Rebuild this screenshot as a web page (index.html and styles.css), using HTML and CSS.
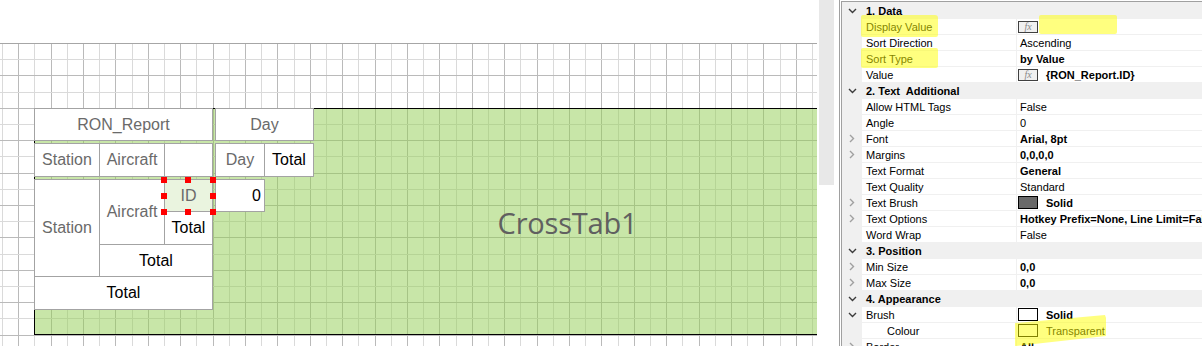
FILE: index.html
```html
<!DOCTYPE html>
<html>
<head>
<meta charset="utf-8">
<link rel="stylesheet" href="styles.css">
</head>
<body>
<div class="app">
  <div class="designer">
    <div class="page">
      <div class="crosstab">
        <div class="ct-cells">
          <div class="cell hdr g-ron">RON_Report</div>
          <div class="cell hdr g-dayh">Day</div>
          <div class="cell hdr g-st1">Station</div>
          <div class="cell hdr g-ac1">Aircraft</div>
          <div class="cell g-emp"></div>
          <div class="cell hdr g-day2">Day</div>
          <div class="cell g-tot1">Total</div>
          <div class="cell hdr g-st2">Station</div>
          <div class="cell hdr g-ac2">Aircraft</div>
          <div class="cell hdr sel g-id">ID
            <span class="hd h1"></span><span class="hd h2"></span><span class="hd h3"></span>
            <span class="hd h4"></span><span class="hd h5"></span>
            <span class="hd h6"></span><span class="hd h7"></span><span class="hd h8"></span>
          </div>
          <div class="cell num g-zero">0</div>
          <div class="cell g-tot2">Total</div>
          <div class="cell g-tot3">Total</div>
          <div class="cell g-tot4">Total</div>
        </div>
        <div class="ct-title">CrossTab1</div>
      </div>
    </div>
  </div>
  <div class="vscroll"><div class="thumb"></div></div>
  <div class="props">
    <div class="pg">
      <div class="row cat"><span class="gut"><svg class="chev-d" width="9" height="6" viewBox="0 0 9 6"><path d="M1 1 L4.5 4.5 L8 1" /></svg></span><span class="name">1. Data</span></div>
      <div class="row"><span class="gut"></span><span class="name">Display Value</span><span class="val"><span class="fx">fx</span></span></div>
      <div class="row"><span class="gut"></span><span class="name">Sort Direction</span><span class="val"><span class="txt">Ascending</span></span></div>
      <div class="row"><span class="gut"></span><span class="name">Sort Type</span><span class="val"><span class="txt b">by Value</span></span></div>
      <div class="row"><span class="gut"></span><span class="name">Value</span><span class="val"><span class="fx">fx</span><span class="txt b gap">{RON_Report.ID}</span></span></div>
      <div class="row cat"><span class="gut"><svg class="chev-d" width="9" height="6" viewBox="0 0 9 6"><path d="M1 1 L4.5 4.5 L8 1" /></svg></span><span class="name">2. Text  Additional</span></div>
      <div class="row"><span class="gut"></span><span class="name">Allow HTML Tags</span><span class="val"><span class="txt">False</span></span></div>
      <div class="row"><span class="gut"></span><span class="name">Angle</span><span class="val"><span class="txt">0</span></span></div>
      <div class="row"><span class="gut"><svg class="chev-r" width="6" height="9" viewBox="0 0 6 9"><path d="M1 1 L4.5 4.5 L1 8" /></svg></span><span class="name">Font</span><span class="val"><span class="txt b">Arial, 8pt</span></span></div>
      <div class="row"><span class="gut"><svg class="chev-r" width="6" height="9" viewBox="0 0 6 9"><path d="M1 1 L4.5 4.5 L1 8" /></svg></span><span class="name">Margins</span><span class="val"><span class="txt b">0,0,0,0</span></span></div>
      <div class="row"><span class="gut"></span><span class="name">Text Format</span><span class="val"><span class="txt b">General</span></span></div>
      <div class="row"><span class="gut"></span><span class="name">Text Quality</span><span class="val"><span class="txt">Standard</span></span></div>
      <div class="row"><span class="gut"><svg class="chev-r" width="6" height="9" viewBox="0 0 6 9"><path d="M1 1 L4.5 4.5 L1 8" /></svg></span><span class="name">Text Brush</span><span class="val"><span class="sw sw-gray"></span><span class="txt b gap">Solid</span></span></div>
      <div class="row"><span class="gut"><svg class="chev-r" width="6" height="9" viewBox="0 0 6 9"><path d="M1 1 L4.5 4.5 L1 8" /></svg></span><span class="name">Text Options</span><span class="val"><span class="txt b">Hotkey Prefix=None, Line Limit=False, Word Wrap=False</span></span></div>
      <div class="row"><span class="gut"></span><span class="name">Word Wrap</span><span class="val"><span class="txt">False</span></span></div>
      <div class="row cat"><span class="gut"><svg class="chev-d" width="9" height="6" viewBox="0 0 9 6"><path d="M1 1 L4.5 4.5 L8 1" /></svg></span><span class="name">3. Position</span></div>
      <div class="row"><span class="gut"><svg class="chev-r" width="6" height="9" viewBox="0 0 6 9"><path d="M1 1 L4.5 4.5 L1 8" /></svg></span><span class="name">Min Size</span><span class="val"><span class="txt b">0,0</span></span></div>
      <div class="row"><span class="gut"><svg class="chev-r" width="6" height="9" viewBox="0 0 6 9"><path d="M1 1 L4.5 4.5 L1 8" /></svg></span><span class="name">Max Size</span><span class="val"><span class="txt b">0,0</span></span></div>
      <div class="row cat"><span class="gut"><svg class="chev-d" width="9" height="6" viewBox="0 0 9 6"><path d="M1 1 L4.5 4.5 L8 1" /></svg></span><span class="name">4. Appearance</span></div>
      <div class="row"><span class="gut"><svg class="chev-d" width="9" height="6" viewBox="0 0 9 6"><path d="M1 1 L4.5 4.5 L8 1" /></svg></span><span class="name">Brush</span><span class="val"><span class="sw sw-white"></span><span class="txt b gap">Solid</span></span></div>
      <div class="row"><span class="gut"></span><span class="name sub">Colour</span><span class="val"><span class="sw sw-white"></span><span class="txt gap">Transparent</span></span></div>
      <div class="row"><span class="gut"><svg class="chev-r" width="6" height="9" viewBox="0 0 6 9"><path d="M1 1 L4.5 4.5 L1 8" /></svg></span><span class="name">Border</span><span class="val"><span class="txt b">All</span></span></div>
    </div>
  </div>
  <div class="hl hl-dv"></div>
  <div class="hl hl-st"></div>
  <div class="hl hl-dvv"></div>
  <div class="hl hl-tr"></div>
</div>
</body>
</html>
```

FILE: styles.css
```css
* { box-sizing: border-box; }
html, body { margin: 0; padding: 0; }
body {
  width: 1202px;
  height: 346px;
  overflow: hidden;
  background: #fff;
  font-family: "Liberation Sans", Arial, sans-serif;
}
.app {
  position: relative;
  display: flex;
  height: 346px;
}

/* ---------- designer canvas ---------- */
.designer {
  flex: none;
  width: 817px;
  height: 346px;
  overflow: hidden;
  background: #fff;
}
.page {
  margin-top: 43px;
  height: 303px;
  border-top: 1px solid #a6a6a6;
  background-image:
    repeating-linear-gradient(180deg, transparent 0 15.2px, #dadada 15.2px 16.2px, transparent 16.2px 31.4px, #bababa 31.4px 32.4px),
    repeating-linear-gradient(90deg, transparent 0 2px, #dadada 2px 3px, transparent 3px 18.2px, #bababa 18.2px 19.2px, transparent 19.2px 32.4px);
}
.crosstab {
  margin: 64px 0 0 34px;
  width: 1066px;
  height: 227px;
  border: 1px solid #000;
  border-right: none;
  background: rgba(145, 205, 81, 0.5);
  display: grid;
}
.ct-cells {
  grid-area: 1 / 1;
  align-self: start;
  justify-self: start;
  margin: -1px 0 0 -1px;
  display: grid;
  grid-template-columns: 65px 65px 48px 3px 49px 49px;
  grid-template-rows: 32px 3px 33px 3px 32px 33px 32px 33px;
}
.cell {
  margin: 0 -1px -1px 0;
  border: 1px solid #a3a3a3;
  background: #fff;
  display: flex;
  align-items: center;
  justify-content: center;
  font-size: 16px;
  color: #000;
  white-space: nowrap;
}
.cell.hdr { color: #6a6a6a; }
.cell.num { justify-content: flex-end; padding-right: 3px; }
.cell.sel {
  position: relative;
  z-index: 1;
  background: #eaf4df;
}
.g-ron  { grid-column: 1 / 4; grid-row: 1 / 2; }
.g-dayh { grid-column: 5 / 7; grid-row: 1 / 2; }
.g-st1  { grid-column: 1 / 2; grid-row: 3 / 4; }
.g-ac1  { grid-column: 2 / 3; grid-row: 3 / 4; }
.g-emp  { grid-column: 3 / 4; grid-row: 3 / 4; }
.g-day2 { grid-column: 5 / 6; grid-row: 3 / 4; }
.g-tot1 { grid-column: 6 / 7; grid-row: 3 / 4; }
.g-st2  { grid-column: 1 / 2; grid-row: 5 / 8; }
.g-ac2  { grid-column: 2 / 3; grid-row: 5 / 7; }
.g-id   { grid-column: 3 / 4; grid-row: 5 / 6; }
.g-zero { grid-column: 5 / 6; grid-row: 5 / 6; }
.g-tot2 { grid-column: 3 / 4; grid-row: 6 / 7; }
.g-tot3 { grid-column: 2 / 4; grid-row: 7 / 8; }
.g-tot4 { grid-column: 1 / 4; grid-row: 8 / 9; }

.hd {
  position: absolute;
  width: 6px;
  height: 6px;
  background: #ff0000;
}
.h1 { left: -4px; top: -3px; }
.h2 { left: 20px; top: -3px; }
.h3 { left: 45px; top: -3px; }
.h4 { left: -4px; top: 13px; }
.h5 { left: 45px; top: 13px; }
.h6 { left: -4px; top: 29px; }
.h7 { left: 20px; top: 29px; }
.h8 { left: 45px; top: 29px; }

.ct-title {
  grid-area: 1 / 1;
  place-self: center;
  margin-top: 2px;
  font-family: "Open Sans", "Noto Sans", sans-serif;
  font-size: 29px;
  color: #606060;
  letter-spacing: -0.2px;
}

/* ---------- scrollbar ---------- */
.vscroll {
  flex: none;
  width: 22px;
  height: 346px;
  background: #fff;
}
.thumb {
  margin-left: 2px;
  width: 15px;
  height: 185px;
  background: #e8e8e8;
}

/* ---------- property grid ---------- */
.props {
  flex: 1;
  height: 346px;
  border-left: 1px solid #a0a0a0;
  padding: 1px 0 0 1px;
  overflow: hidden;
}
.pg {
  height: 100%;
  border-left: 1px solid #a0a0a0;
  border-top: 1px solid #a0a0a0;
  font-size: 11px;
  color: #000;
}
.row {
  display: grid;
  grid-template-columns: 20px 154px 1fr;
  height: 16px;
  border-top: 1px solid #f0f0f0;
  line-height: 15px;
}
.gut {
  background: #f0f0f0;
  display: flex;
  align-items: center;
  justify-content: center;
}
.name {
  padding-left: 4px;
  padding-top: 1px;
  white-space: pre;
  overflow: hidden;
}
.name.sub { padding-left: 25px; }
.val {
  border-left: 1px solid #f0f0f0;
  padding-left: 1px;
  display: flex;
  align-items: center;
  white-space: nowrap;
  overflow: hidden;
}
.row.cat { background: #f0f0f0; }
.row.cat .name { grid-column: 2 / 4; font-weight: bold; }
.txt { margin-left: 2px; padding-top: 2px; }
.txt.gap { margin-left: 8px; }
.b { font-weight: bold; }

.chev-d path { fill: none; stroke: #3c3c3c; stroke-width: 1.4; }
.chev-r path { fill: none; stroke: #a0a0a0; stroke-width: 1.4; }

.fx {
  flex: none;
  width: 20px;
  height: 12px;
  border: 1px solid #404040;
  background: #f0f0f0;
  font-family: "Liberation Serif", "Times New Roman", serif;
  font-style: italic;
  font-size: 10px;
  line-height: 10px;
  color: #8a8a8a;
  text-align: center;
}
.sw {
  flex: none;
  width: 20px;
  height: 13px;
  border: 1px solid #000;
}
.sw-gray { background: #696969; }
.sw-white { background: #fff; }

/* ---------- marker highlights ---------- */
.hl {
  position: absolute;
  background: rgba(255, 255, 0, 0.5);
  pointer-events: none;
}
.hl-dv  { left: 861px; top: 15px; width: 77px; height: 22px; border-radius: 2px 3px 2px 2px; }
.hl-st  { left: 861px; top: 48px; width: 77px; height: 20px; border-radius: 2px; }
.hl-dvv { left: 1039px; top: 15px; width: 78px; height: 19px; border-radius: 2px; }
.hl-tr  {
  left: 1015px; top: 314px; width: 91px; height: 32px;
  clip-path: polygon(0 9px, 90px 1px, 91px 4px, 91px 22px, 0 32px);
}
```
